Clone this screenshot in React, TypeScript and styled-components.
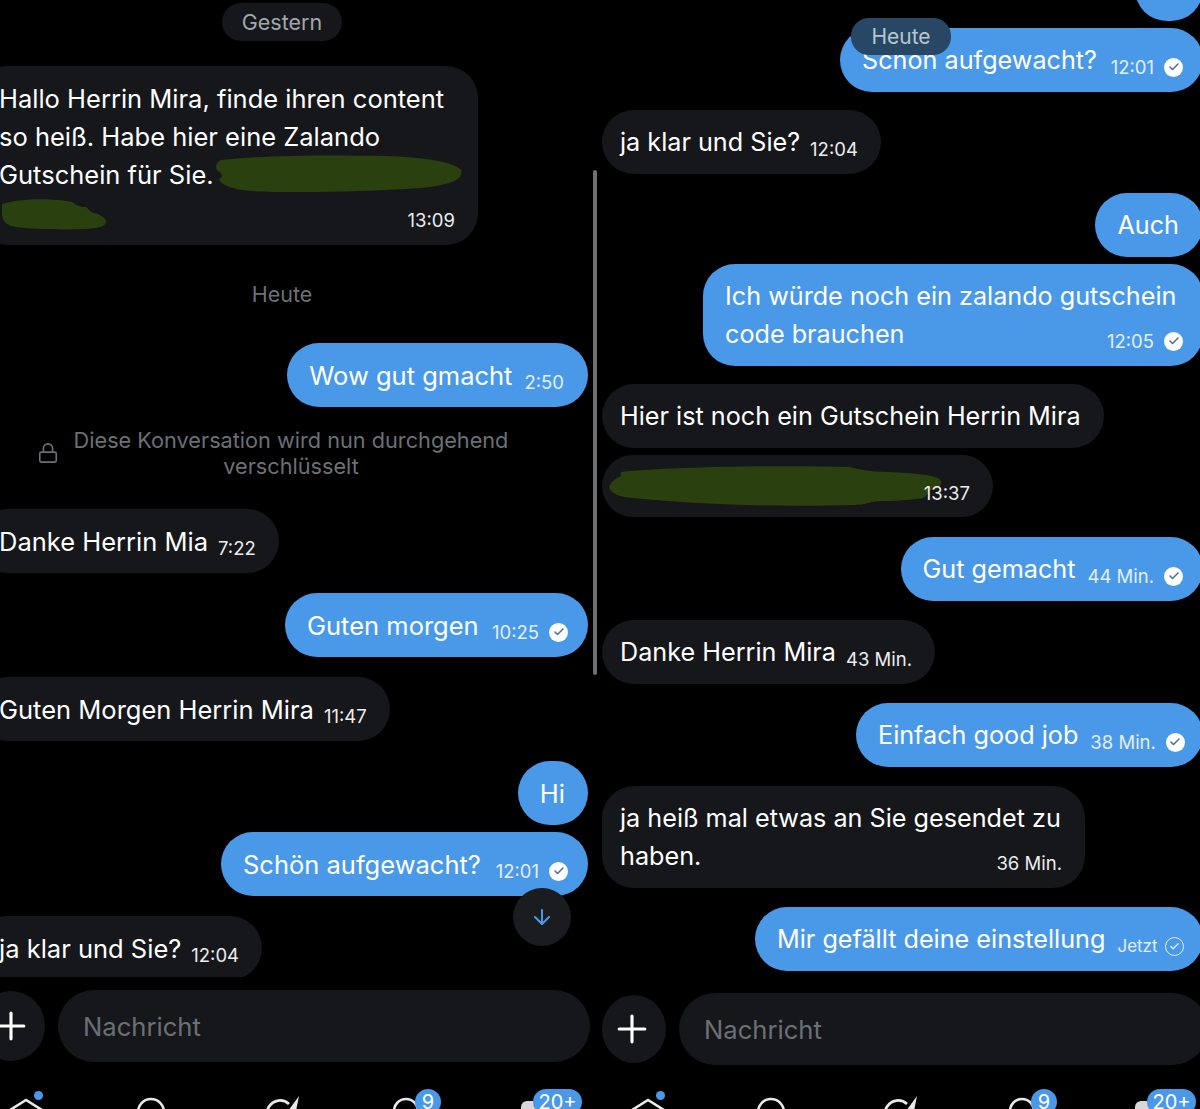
import React from 'react';
import styled, { createGlobalStyle } from 'styled-components';
import { ArrowDown, Check, Lock, Plus } from 'lucide-react';

const GlobalStyle = createGlobalStyle`
  html, body {
    margin: 0;
    padding: 0;
    background: #000;
  }
  * {
    box-sizing: border-box;
  }
`;

const Page = styled.div`
  width: 1200px;
  height: 1109px;
  overflow: hidden;
  display: grid;
  grid-template-columns: 593px 4px 603px;
  background: #000;
  color: #fff;
  font-family: Inter, 'Noto Sans', sans-serif;
`;
const Column = styled.div<{ $right?: boolean }>`
  position: relative;
  height: 1109px;
  display: flex;
  flex-direction: column;
  overflow: hidden;
  font-size: ${(p) => (p.$right ? '25.2px' : '25.5px')};
`;
const Divider = styled.div`
  margin-top: 170px;
  height: 505px;
  border-radius: 2px;
  background: #6f7072;
`;
const Messages = styled.div<{ $right?: boolean }>`
  flex: none;
  height: ${(p) => (p.$right ? '980px' : '977px')};
  display: flex;
  flex-direction: column;
  padding: ${(p) => (p.$right ? '0 0 0 5px' : '0 5px 0 0')};
  overflow: ${(p) => (p.$right ? 'visible' : 'hidden')};
`;
const DatePill = styled.div<{ $mt?: number; $plain?: boolean }>`
  flex: none;
  align-self: center;
  margin: ${(p) => p.$mt ?? 0}px 24px 0 0;
  height: 38px;
  padding: 0 20px;
  border-radius: 19px;
  display: flex;
  align-items: center;
  font-size: 21.5px;
  color: ${(p) => (p.$plain ? '#6b7075' : '#a3a7ab')};
  background: ${(p) => (p.$plain ? 'transparent' : '#16171a')};
`;
const FloatingDate = styled.div`
  position: absolute;
  left: 254px;
  top: 18px;
  width: 100px;
  height: 37px;
  border-radius: 18px;
  display: flex;
  align-items: center;
  justify-content: center;
  font-size: 21px;
  color: #b9c6d2;
  background: #274764;
  z-index: 2;
`;
const Bubble = styled.div<{
  $out?: boolean;
  $mt?: number;
  $w?: number;
  $h?: number;
  $edge?: boolean;
  $pr?: number;
}>`
  position: relative;
  flex: none;
  align-self: ${(p) => (p.$out ? 'flex-end' : 'flex-start')};
  width: ${(p) => (p.$w ? `${p.$w}px` : 'auto')};
  min-height: ${(p) => p.$h ?? 64}px;
  height: ${(p) => (p.$h ? `${p.$h}px` : 'auto')};
  margin-top: ${(p) => p.$mt ?? 0}px;
  margin-left: ${(p) => (!p.$out && p.$edge ? '-24px' : '0')};
  margin-right: ${(p) => (p.$out && p.$edge ? '-3px' : '0')};
  padding-top: ${(p) => (p.$h ? 0 : 13)}px;
  padding-bottom: ${(p) => (p.$h ? 0 : 13)}px;
  padding-left: ${(p) => (p.$out ? 22 : p.$edge ? 23 : 18)}px;
  padding-right: ${(p) => p.$pr ?? (p.$out ? 20 : 23)}px;
  border-radius: 32px;
  display: flex;
  flex-direction: column;
  justify-content: center;
  background: ${(p) => (p.$out ? '#4a99e9' : '#16171a')};
`;
const Line = styled.div`
  position: relative;
  z-index: 1;
  flex: none;
  height: 38px;
  display: flex;
  align-items: center;
  justify-content: space-between;
  gap: 12px;
  white-space: nowrap;
`;
const Meta = styled.span<{ $out?: boolean; $tight?: boolean }>`
  margin-top: 14px;
  margin-left: ${(p) => (p.$out ? '0' : '-2px')};
  display: inline-flex;
  align-items: center;
  gap: ${(p) => (p.$tight ? '7px' : '10px')};
  font-size: ${(p) => (p.$tight ? '17px' : '18.5px')};
  color: ${(p) => (p.$out ? '#e2effc' : '#eceded')};
`;
const Tick = styled.span<{ $outline?: boolean }>`
  width: 19px;
  height: 19px;
  border-radius: 50%;
  display: inline-flex;
  align-items: center;
  justify-content: center;
  color: ${(p) => (p.$outline ? '#e2effc' : '#4a6d94')};
  background: ${(p) => (p.$outline ? 'transparent' : '#fff')};
  border: ${(p) => (p.$outline ? '1.8px solid #e2effc' : 'none')};
`;
const Redaction = styled.svg<{ $x: number; $y: number }>`
  position: absolute;
  left: ${(p) => p.$x}px;
  top: ${(p) => p.$y}px;
  overflow: visible;
`;
const Note = styled.div`
  flex: none;
  margin: 20px 0 0 37px;
  display: flex;
  align-items: center;
  gap: 12px;
  color: #6b7075;
`;
const NoteText = styled.div`
  width: 440px;
  text-align: center;
  white-space: nowrap;
  font-size: 21.7px;
  line-height: 26px;
`;
const ScrollDown = styled.div`
  position: absolute;
  left: 513px;
  top: 888px;
  width: 58px;
  height: 58px;
  border-radius: 50%;
  display: flex;
  align-items: center;
  justify-content: center;
  color: #4a99e9;
  background: #1a1c20;
`;
const Composer = styled.div<{ $right?: boolean }>`
  flex: none;
  height: 72px;
  margin-top: 13px;
  margin-left: ${(p) => (p.$right ? '5px' : '-23px')};
  margin-right: ${(p) => (p.$right ? '-8px' : '3px')};
  display: flex;
  align-items: center;
  gap: 13px;
`;
const PlusButton = styled.div<{ $right?: boolean }>`
  flex: none;
  width: ${(p) => (p.$right ? '64px' : '68px')};
  height: ${(p) => (p.$right ? '68px' : '70px')};
  border-radius: 50%;
  display: flex;
  align-items: center;
  justify-content: center;
  background: #16171a;
  padding-right: ${(p) => (p.$right ? '4px' : '0')};
`;
const Input = styled.div`
  flex: 1;
  height: 72px;
  padding-left: 25px;
  border-radius: 36px;
  display: flex;
  align-items: center;
  font-size: 25.6px;
  color: #6b7075;
  background: #16171a;
`;
const Nav = styled.div<{ $right?: boolean }>`
  flex: none;
  margin-top: ${(p) => (p.$right ? '32px' : '35px')};
  margin-left: ${(p) => (p.$right ? '36px' : '11px')};
  display: flex;
  gap: ${(p) => (p.$right ? '91px' : '93px')};
`;
const NavItem = styled.div`
  position: relative;
  width: 32px;
  height: 32px;
  color: #e7e9ea;
`;
const Dot = styled.span`
  position: absolute;
  left: 23px;
  top: -6px;
  width: 9px;
  height: 9px;
  border-radius: 50%;
  background: #4a99e9;
`;
const Badge = styled.span<{ $x: number; $wide?: boolean }>`
  position: absolute;
  left: ${(p) => p.$x}px;
  top: -8px;
  width: ${(p) => (p.$wide ? '49px' : '26px')};
  height: 26px;
  border-radius: 13px;
  display: flex;
  align-items: center;
  justify-content: center;
  font-size: 20px;
  color: #fff;
  background: #4a99e9;
`;

function Stamp({ time, out, tick }: { time: string; out?: boolean; tick?: 'solid' | 'outline' }) {
  return (
    <Meta $out={out} $tight={tick === 'outline'}>
      {time}
      {tick && (
        <Tick $outline={tick === 'outline'}>
          <Check size={tick === 'outline' ? 11 : 12} strokeWidth={3} />
        </Tick>
      )}
    </Meta>
  );
}

function NavIcons({ right }: { right?: boolean }) {
  return (
    <Nav $right={right}>
      <NavItem>
        <svg width="32" height="32" viewBox="0 0 32 32" fill="none" stroke="currentColor" strokeWidth="2.6" overflow="visible">
          <path d="M-1 13 15 3l16 10v17H-1z" />
        </svg>
        <Dot />
      </NavItem>
      <NavItem>
        <svg width="32" height="32" viewBox="0 0 32 32" fill="none" stroke="currentColor" strokeWidth="2.6">
          <circle cx="15" cy="15" r="13" />
        </svg>
      </NavItem>
      <NavItem>
        <svg width="32" height="32" viewBox="0 0 32 32" fill="none" overflow="visible">
          <path d="M28 7A13 13 0 1 0 32 18" stroke="currentColor" strokeWidth="2.8" />
          <path d="M38-1 27 14l8 0z" fill="currentColor" />
        </svg>
      </NavItem>
      <NavItem>
        <svg width="32" height="32" viewBox="0 0 32 32" fill="none" stroke="currentColor" strokeWidth="2.6">
          <path d="M8 24V14a12 12 0 0 1 24 0" />
        </svg>
        <Badge $x={29}>9</Badge>
      </NavItem>
      <NavItem>
        <svg width="32" height="32" viewBox="0 0 32 32" fill="#d8d8d8" overflow="visible">
          <rect x="10" y="4" width="32" height="26" rx="6" />
        </svg>
        <Badge $x={22} $wide>20+</Badge>
      </NavItem>
    </Nav>
  );
}

export default function App() {
  return (
    <>
      <GlobalStyle />
      <Page>
        <Column>
          <Messages>
            <DatePill $mt={3}>Gestern</DatePill>
            <Bubble $edge $mt={25} $w={502} $h={179}>
              <Line>Hallo Herrin Mira, finde ihren content</Line>
              <Line>so heiß. Habe hier eine Zalando</Line>
              <Line>Gutschein für Sie.</Line>
              <Line>
                <span />
                <Meta>13:09</Meta>
              </Line>
              <Redaction $x={239} $y={89} width="248" height="37" viewBox="0 0 248 37" fill="#2a400f">
                <path d="M6 5C50 0 120 0 170 1c35 1 68 5 76 14 3 9-10 15-40 18-60 4-130 5-170 3C22 35 6 31 4 24c6-3 2-6-2-9C0 10 2 7 6 5z" />
              </Redaction>
              <Redaction $x={18} $y={132} width="112" height="32" viewBox="0 0 112 32" fill="#2a400f">
                <path d="M8 6C25 0 60 0 78 4c4 3 7 5 14 5 3 2 4 5 8 6 8 2 12 6 12 9-1 5-8 6-20 7-25 1-55 0-70-2C14 28 8 24 8 16z" />
              </Redaction>
            </Bubble>
            <DatePill $plain $mt={30}>Heute</DatePill>
            <Bubble $out $mt={30} $pr={24}>
              <Line>
                Wow gut gmacht
                <Stamp time="2:50" out />
              </Line>
            </Bubble>
            <Note>
              <Lock size={22} strokeWidth={1.8} />
              <NoteText>
                Diese Konversation wird nun durchgehend
                <br />
                verschlüsselt
              </NoteText>
            </Note>
            <Bubble $edge $mt={30}>
              <Line>
                Danke Herrin Mia
                <Stamp time="7:22" />
              </Line>
            </Bubble>
            <Bubble $out $mt={20} $w={303}>
              <Line>
                Guten morgen
                <Stamp time="10:25" out tick="solid" />
              </Line>
            </Bubble>
            <Bubble $edge $mt={20}>
              <Line>
                Guten Morgen Herrin Mira
                <Stamp time="11:47" />
              </Line>
            </Bubble>
            <Bubble $out $mt={20} $pr={23}>
              <Line>Hi</Line>
            </Bubble>
            <Bubble $out $mt={7} $w={367}>
              <Line>
                Schön aufgewacht?
                <Stamp time="12:01" out tick="solid" />
              </Line>
            </Bubble>
            <Bubble $edge $mt={20}>
              <Line>
                ja klar und Sie?
                <Stamp time="12:04" />
              </Line>
            </Bubble>
          </Messages>
          <ScrollDown>
            <ArrowDown size={24} strokeWidth={2} />
          </ScrollDown>
          <Composer>
            <PlusButton>
              <Plus size={44} strokeWidth={1.7} color="#fff" />
            </PlusButton>
            <Input>Nachricht</Input>
          </Composer>
          <NavIcons />
        </Column>
        <Divider />
        <Column $right>
          <FloatingDate>Heute</FloatingDate>
          <Messages $right>
            <Bubble $out $edge $mt={-43} $w={68} />
            <Bubble $out $edge $mt={7} $w={363}>
              <Line>
                Schön aufgewacht?
                <Stamp time="12:01" out tick="solid" />
              </Line>
            </Bubble>
            <Bubble $mt={18}>
              <Line>
                ja klar und Sie?
                <Stamp time="12:04" />
              </Line>
            </Bubble>
            <Bubble $out $edge $mt={19} $pr={24}>
              <Line>Auch</Line>
            </Bubble>
            <Bubble $out $edge $mt={7} $w={500}>
              <Line>Ich würde noch ein zalando gutschein</Line>
              <Line>
                code brauchen
                <Stamp time="12:05" out tick="solid" />
              </Line>
            </Bubble>
            <Bubble $mt={18} $w={502}>
              <Line>Hier ist noch ein Gutschein Herrin Mira</Line>
            </Bubble>
            <Bubble $mt={7} $h={62} $w={391}>
              <Line>
                <span />
                <Stamp time="13:37" />
              </Line>
              <Redaction $x={7} $y={11} width="333" height="44" viewBox="0 0 333 44" fill="#2a400f">
                <path d="M12 6C60 1 170-1 240 1c10 2 20 5 40 5 25 1 50 3 52 9 1 6-4 9-10 9-3 2-4 6-8 8-8 1-20 3-40 3-14 0-15 4-30 4-70 2-150 0-220-7C10 31 1 27 0 21 2 15 8 12 12 10z" />
              </Redaction>
            </Bubble>
            <Bubble $out $edge $mt={20}>
              <Line>
                Gut gemacht
                <Stamp time="44 Min." out tick="solid" />
              </Line>
            </Bubble>
            <Bubble $mt={19}>
              <Line>
                Danke Herrin Mira
                <Stamp time="43 Min." />
              </Line>
            </Bubble>
            <Bubble $out $edge $mt={19} $w={347}>
              <Line>
                Einfach good job
                <Stamp time="38 Min." out tick="solid" />
              </Line>
            </Bubble>
            <Bubble $mt={19} $w={483}>
              <Line>ja heiß mal etwas an Sie gesendet zu</Line>
              <Line>
                haben.
                <Stamp time="36 Min." />
              </Line>
            </Bubble>
            <Bubble $out $edge $mt={19} $w={448}>
              <Line>
                Mir gefällt deine einstellung
                <Stamp time="Jetzt" out tick="outline" />
              </Line>
            </Bubble>
          </Messages>
          <Composer $right>
            <PlusButton $right>
              <Plus size={44} strokeWidth={1.7} color="#fff" />
            </PlusButton>
            <Input>Nachricht</Input>
          </Composer>
          <NavIcons right />
        </Column>
      </Page>
    </>
  );
}
